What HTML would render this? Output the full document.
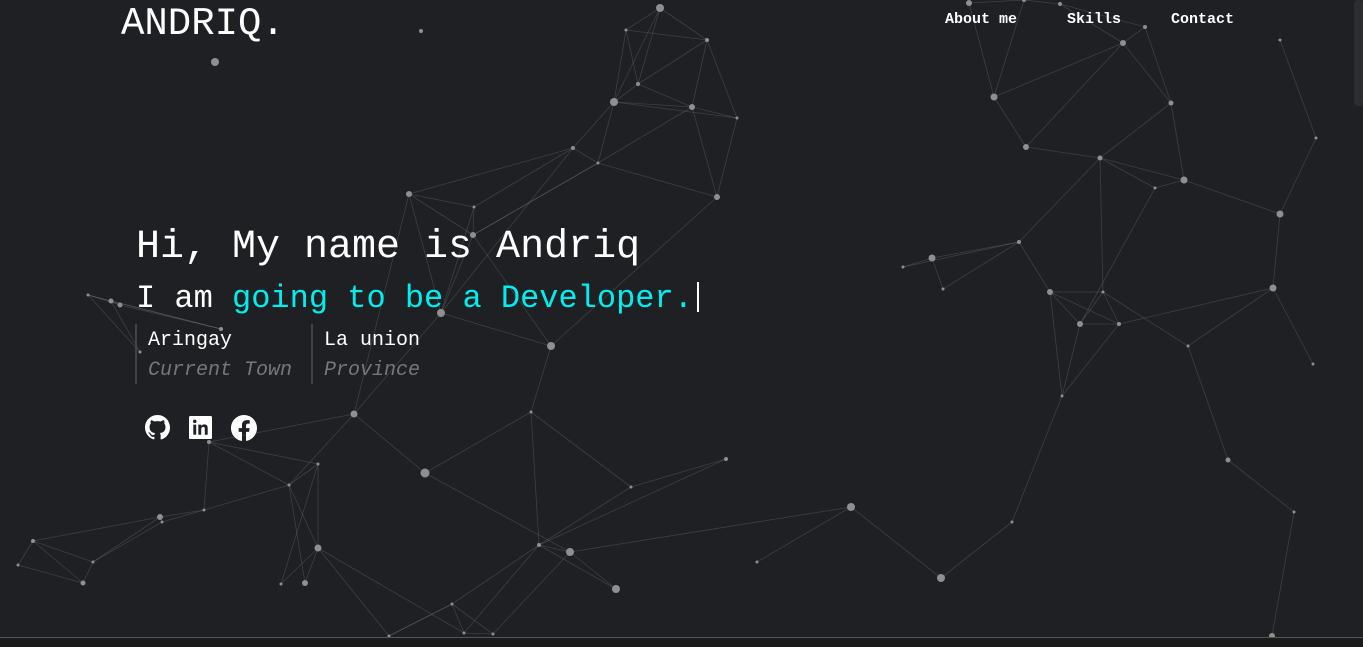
<!DOCTYPE html>
<html><head><meta charset="utf-8"><style>
html,body{margin:0;padding:0;width:1363px;height:646px;overflow:hidden;background:#1f2024;font-family:"Liberation Mono",monospace;color:#fff}
svg.bg{position:absolute;left:0;top:0}
.logo{position:absolute;left:121px;top:1px;font-size:39px;line-height:46px}
.nav{position:absolute;top:11px;font-size:15px;font-weight:bold;font-family:"Liberation Mono",monospace}
h1{position:absolute;left:136px;top:224px;margin:0;font-weight:normal;font-size:40px;line-height:48px;white-space:nowrap}
h2{position:absolute;left:136px;top:279px;margin:0;font-weight:normal;font-size:32px;line-height:40px;white-space:nowrap}
h2 span{color:#00eeee}
.cur{display:inline-block;width:2px;height:30px;background:#fff;vertical-align:-5px;margin-left:4px}
.col{position:absolute;top:324px;height:60px;border-left:2px solid #444;padding-left:11px;font-size:20px;line-height:30px;padding-top:2px;box-sizing:border-box}
.col i{color:#777;display:block}
.ic{position:absolute;top:415px}
.bar{position:absolute;left:0;top:637px;width:1363px;height:9px;background:#1b1b1c;border-top:1px solid #555}
.sb{position:absolute;right:0;top:0;width:9px;height:106px;background:#2c2d31;border-radius:4px}
</style></head><body>
<svg class="bg" width="1363" height="646" id="net"></svg>
<div class="logo">ANDRIQ.</div>
<div class="nav" style="left:945px">About me</div>
<div class="nav" style="left:1067px">Skills</div>
<div class="nav" style="left:1171px">Contact</div>
<h1>Hi, My name is Andriq</h1>
<h2>I am <span>going to be a Developer.</span><b class="cur"></b></h2>
<div class="col" style="left:135px">Aringay<i>Current Town</i></div>
<div class="col" style="left:311px">La union<i>Province</i></div>
<svg class="ic" style="left:145px" width="25" height="25" viewBox="0 0 16 16"><path fill="#fff" d="M8 0C3.580 0 0 3.58 0 8c0 3.54 2.29 6.530 5.47 7.59.4.07.55-.17.55-.38v-1.33c-2.23.48-2.7-1.07-2.7-1.07-.36-.92-.89-1.17-.89-1.17-.73-.5.05-.49.05-.49.8.06 1.23.82 1.23.82.71 1.22 1.87.87 2.33.66.07-.52.28-.87.51-1.070-1.78-.2-3.64-.89-3.64-3.95 0-.87.31-1.59.82-2.15-.08-.2-.36-1.02.08-2.12 0 0 .67-.21 2.2.82a7.6 7.6 0 0 1 4 0c1.53-1.04 2.2-.82 2.2-.82.44 1.1.16 1.92.08 2.12.51.56.82 1.27.82 2.15 0 3.07-1.87 3.75-3.65 3.95.29.25.54.73.54 1.48v2.2c0 .21.15.46.55.38A8 8 0 0 0 16 8c0-4.42-3.58-8-8-8z"/></svg>
<svg class="ic" style="left:189px" width="23" height="25" viewBox="0 0 16 17"><rect x="0" y="0.5" width="16" height="16" rx="1" fill="#fff"/><rect x="3" y="6.5" width="2" height="7" fill="#1f2024"/><circle cx="4" cy="4.2" r="1.2" fill="#1f2024"/><path fill="#1f2024" d="M6.5 6.5h2v1c.4-.7 1.2-1.2 2.2-1.2 1.7 0 2.3 1 2.3 2.8v4.4h-2V9.6c0-.9-.2-1.5-1-1.5s-1.5.6-1.5 1.6v3.8h-2z"/></svg>
<svg class="ic" style="left:231px" width="26" height="26" viewBox="0 0 16 16"><path fill="#fff" d="M16 8.05C16 3.6 12.42 0 8 0S0 3.6 0 8.05c0 4.02 2.93 7.35 6.75 7.95v-5.62H4.72V8.05h2.03V6.28c0-2.01 1.2-3.13 3.02-3.13.88 0 1.8.16 1.8.16v1.98h-1.01c-1 0-1.310.62-1.31 1.26v1.5h2.22l-.35 2.33H9.25V16C13.07 15.4 16 12.07 16 8.05z"/></svg>
<div class="bar"></div>
<div class="sb"></div>
<script>
var N={A:[215,62,4],B:[421,31,2],C:[660,8,4],D:[626,30,1.5],E:[707,40,2],F:[638,84,2],G:[614,102,4],H:[692,107,3],I:[737,118,1.5],J:[573,148,2],K:[598,163,1.5],L:[717,197,3],M:[409,194,3],N:[474,207,1.5],O:[473,235,3],P:[441,313,4],Q:[551,346,4],R:[354,414,3.5],S:[531,412,1.5],T:[425,473,4.5],U:[726,459,2],V:[631,487,1.5],W:[851,507,4],X:[941,578,4],Y:[570,552,4],Z:[539,545,2],a:[616,589,4],b:[452,604,1.5],c:[464,633,1.5],d:[493,634,1.5],e:[389,636,1.5],f:[209,442,2],g:[318,464,1.5],h:[289,485,1.5],i:[204,510,1.5],j:[160,517,3],k:[162,522,1.5],l:[318,548,3.5],m:[305,583,3],n:[281,584,1.5],o:[33,541,2],p:[18,565,1.5],q:[93,562,1.5],r:[83,583,2.5],s:[88,295,1.5],t:[111,301,2.5],u:[120,305,2.5],v:[221,329,2],w:[140,352,1.5],x:[969,3,3],y:[1024,0,2],z:[1060,4,2],AA:[1123,43,3],AB:[1145,27,2],AC:[1171,103,2.5],AD:[994,97,3.5],AE:[1026,147,3],AF:[1100,158,2.5],AG:[1184,180,3.5],AH:[1155,188,1.5],AI:[1280,40,1.5],AJ:[1316,138,1.5],AK:[1280,214,3.5],AL:[1019,242,2],AM:[932,258,3.5],AN:[903,267,1.5],AO:[943,289,1.5],AP:[1050,292,3],AQ:[1103,292,1.5],AR:[1080,324,3],AS:[1119,324,2],AT:[1188,346,1.5],AU:[1273,288,3.5],AV:[1313,364,1.5],AW:[1062,396,1.5],AX:[1228,460,2.5],AY:[1294,512,1.5],AZ:[1012,522,1.5],BA:[1272,636,3],BB:[757,562,1.5]};
var E="C-D C-E C-F C-G D-F D-E D-G E-H E-I E-F F-G F-H G-H G-J G-K H-I H-L I-L J-K J-M J-N K-L K-O K-H G-I M-N M-O M-P N-O N-P O-P O-Q P-Q P-R M-R P-J O-K Q-S S-T S-Z R-T R-f R-h T-Y Q-L S-V V-U V-Z Z-Y Z-a Y-a Z-c Z-b Y-d b-c b-e c-d b-d e-b U-Z W-X W-Y W-BB f-g f-i f-h g-h g-l g-n h-i h-l h-m l-m l-n i-j i-k j-o j-q j-k k-q o-p o-q o-r p-r q-r t-u s-t s-u s-w s-v t-w u-v t-v l-c l-e x-y y-z x-AD y-AD z-AA z-AB AA-AB AA-AC AA-AE AB-AC AD-AE AD-AA AE-AF AF-AG AF-AH AC-AG AC-AF AG-AK AG-AH AI-AJ AJ-AK AK-AU AF-AL AL-AM AL-AN AL-AO AL-AP AM-AN AM-AO AP-AQ AP-AR AP-AS AQ-AR AQ-AS AQ-AT AR-AS AR-AW AS-AW AP-AW AT-AU AU-AV AT-AX AX-AY AY-BA AZ-X AZ-AW AF-AQ AH-AR AU-AS".split(" ");
var s='';E.forEach(function(e){var p=e.split("-"),a=N[p[0]],b=N[p[1]];if(!a||!b)return;s+='<line x1="'+a[0]+'" y1="'+a[1]+'" x2="'+b[0]+'" y2="'+b[1]+'" stroke="#888" stroke-opacity="0.3" stroke-width="0.8"/>';});
for(var k in N){var n=N[k];s+='<circle cx="'+n[0]+'" cy="'+n[1]+'" r="'+n[2]+'" fill="#8f8f8f"/>';}
document.getElementById("net").innerHTML=s;
</script>
</body></html>
